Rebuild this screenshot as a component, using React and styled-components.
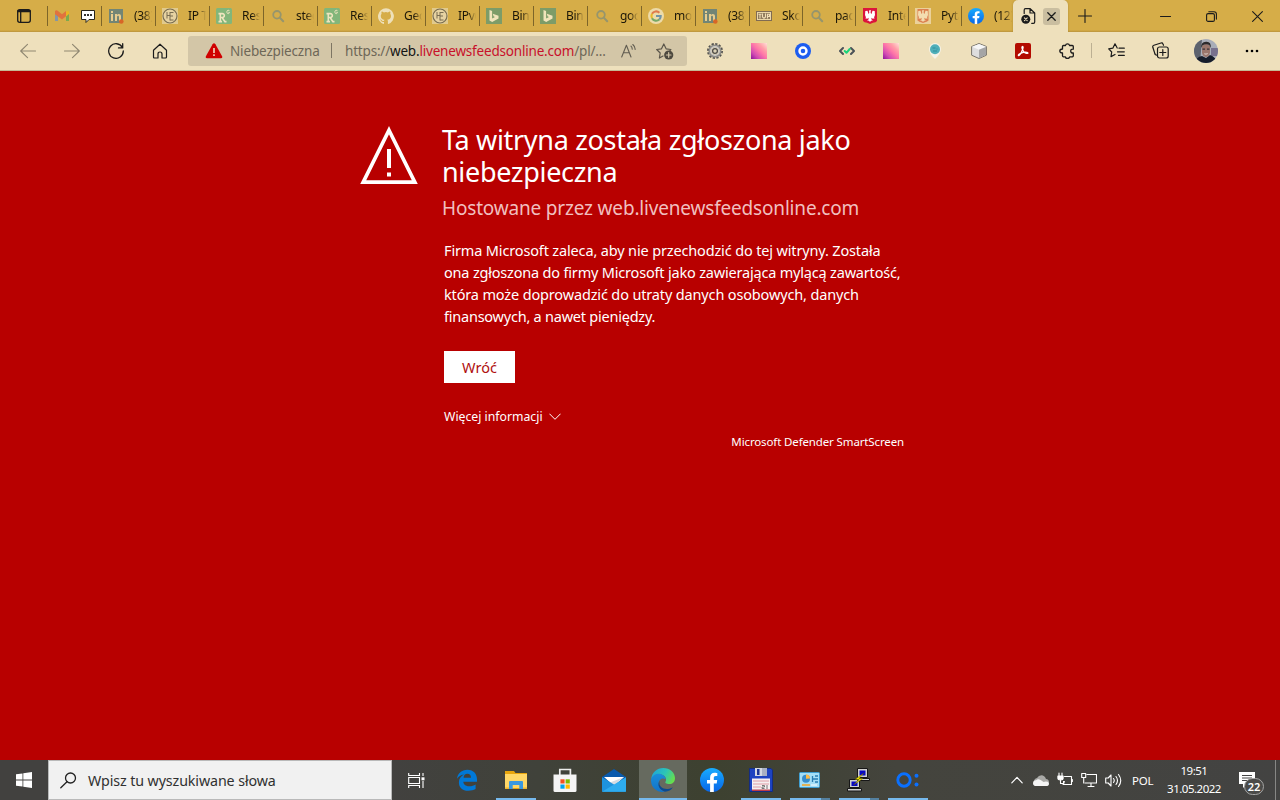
import React from "react";
import styled, { createGlobalStyle, css } from "styled-components";

const Global = createGlobalStyle`
  * { box-sizing: border-box; }
  body { margin: 0; overflow: hidden; font-family: "Noto Sans", "Open Sans", sans-serif; }
  svg { display: block; flex: none; }
`;

const Screen = styled.div`
  width: 1280px;
  height: 800px;
  display: flex;
  flex-direction: column;
  background: #b80000;
`;

/* ---------- tab strip ---------- */
const TabStrip = styled.header`
  height: 32px;
  display: flex;
  background: linear-gradient(#d6ad48 0 30px, #c9a040 31px, #b8933f 32px);
`;
const TabActions = styled.div`
  width: 47px;
  display: flex;
  align-items: center;
  justify-content: center;
`;
const Tab = styled.div`
  width: ${(p) => p.$w}px;
  display: flex;
  align-items: center;
  padding-left: 7px;
  background: linear-gradient(#7d6529, #7d6529) 0 6px / 1px 20px no-repeat;
`;
const TabIcon = styled.div`
  width: 16px;
  height: 16px;
  opacity: ${(p) => (p.$faded ? 0.55 : 1)};
`;
const TabExtra = styled.div`
  width: 16px;
  height: 16px;
  margin-left: 10px;
`;
const TabTitle = styled.span`
  width: 18px;
  margin-left: 10px;
  overflow: hidden;
  white-space: nowrap;
  font-size: 12px;
  line-height: 18px;
  letter-spacing: -0.3px;
  color: #1c1708;
  mask-image: linear-gradient(90deg, #000 55%, transparent 100%);
`;
const ActiveTab = styled.div`
  width: 55px;
  margin-left: -1px;
  display: flex;
  align-items: center;
  gap: 6px;
  padding-left: 8px;
  border-radius: 5px 5px 0 0;
  background: #eee0bc;
  box-shadow: 0 0 2px #86692088;
  clip-path: inset(-3px -3px 0 -3px);
`;
const CloseTab = styled.div`
  width: 17px;
  height: 17px;
  display: grid;
  place-items: center;
  border-radius: 3px;
  background: #cabea0;
`;
const NewTab = styled.div`
  width: 34px;
  display: grid;
  place-items: center;
`;
const WindowButtons = styled.div`
  margin-left: auto;
  display: flex;
`;
const WindowButton = styled.div`
  width: 46px;
  display: grid;
  place-items: center;
`;

/* ---------- toolbar ---------- */
const Toolbar = styled.div`
  height: 39px;
  display: flex;
  align-items: center;
  padding: 0 6px 1px;
  background: #eee0bc;
  border-bottom: 1px solid #c5b794;
`;
const ToolSlot = styled.div`
  flex: none;
  width: ${(p) => p.$w || 44}px;
  height: 36px;
  display: grid;
  place-items: center;
`;
const AddressBar = styled.div`
  flex: none;
  width: 499px;
  height: 30px;
  margin: 0 6px;
  display: flex;
  align-items: center;
  padding-left: 17px;
  border-radius: 3px;
  background: #d3c6a7;
  font-size: 13.5px;
  color: #6e6757;
`;
const Security = styled.span`
  flex: none;
  width: 101px;
  margin-left: 7px;
  letter-spacing: -0.15px;
`;
const AddressDivider = styled.i`
  flex: none;
  width: 1px;
  height: 15px;
  background: #7d7563;
`;
const Url = styled.span`
  flex: none;
  width: 266px;
  margin-left: 13px;
  white-space: nowrap;
  letter-spacing: -0.19px;
  b { font-weight: 400; color: #141414; }
  em { font-style: normal; color: #c8102a; }
`;
const AddressIcon = styled.div`
  flex: none;
  width: 36px;
  display: grid;
  place-items: center;
`;
const ToolDivider = styled.i`
  flex: none;
  width: 1px;
  height: 15px;
  margin: 0 2px;
  background: #bcb093;
`;
const Pixels = styled.div`
  width: 16px;
  height: 16px;
  background: linear-gradient(45deg, #8d139c 0%, #d24bb2 25%, #ff78a8 52%, #ff9fa8 72%, #ffe1d8 100%);
`;
const Avatar = styled.div`
  width: 24px;
  height: 24px;
  border-radius: 50%;
  overflow: hidden;
`;

/* ---------- warning page ---------- */
const Page = styled.main`
  flex: 1;
  display: flex;
  align-items: flex-start;
  padding: 53px 0 0 360px;
  color: #fff;
`;
const WarningSign = styled.div`
  width: 82px;
  padding-top: 2px;
`;
const Message = styled.section`
  width: 462px;
`;
const Title = styled.h1`
  margin: 0;
  font-size: 27px;
  line-height: 32px;
  font-weight: 400;
  letter-spacing: -0.32px;
  white-space: nowrap;
`;
const Host = styled.p`
  margin: 6px 0 0;
  font-size: 19px;
  line-height: 28px;
  letter-spacing: -0.18px;
  color: #f0bfbf;
`;
const Details = styled.div`
  margin: 17px 0 0 2px;
  white-space: nowrap;
`;
const Line = styled.div`
  font-size: 14.5px;
  line-height: 22px;
  letter-spacing: ${(p) => p.$ls}px;
`;
const BackButton = styled.button`
  display: block;
  width: 71px;
  height: 32px;
  margin: 24px 0 0;
  padding: 0;
  border: 0;
  background: #fff;
  color: #b01010;
  font: 400 14.5px/33px "Noto Sans", "Open Sans", sans-serif;
`;
const MoreInfo = styled.div`
  display: flex;
  align-items: center;
  gap: 6px;
  margin-top: 23px;
  font-size: 12.25px;
  line-height: 22px;
`;
const Brand = styled.div`
  margin-top: 5px;
  text-align: right;
  font-size: 11.5px;
  line-height: 18px;
  letter-spacing: -0.13px;
`;

/* ---------- taskbar ---------- */
const Taskbar = styled.footer`
  height: 40px;
  display: flex;
  background: linear-gradient(90deg, #42413f 0, #42413f 30%, #40423a 42%, #3d4130 56%, #44443d 70%, #434342 100%);
`;
const Start = styled.div`
  width: 48px;
  display: grid;
  place-items: center;
`;
const Search = styled.div`
  width: 344px;
  display: flex;
  align-items: center;
  gap: 11px;
  padding-left: 11px;
  border: 1px solid #b9b9b9;
  background: #f1f1f1;
  color: #303030;
  font-size: 14.25px;
  letter-spacing: -0.1px;
  span { white-space: nowrap; }
`;
const Task = styled.div`
  width: 49px;
  display: grid;
  place-items: center;
  ${(p) =>
    p.$open &&
    css`
      background: linear-gradient(90deg, #76b9ed 0 ${p.$stack ? "31px" : "40px"}, #54809f ${p.$stack ? "31px" : "40px"})
        5px bottom / 40px 2px no-repeat;
    `}
  ${(p) =>
    p.$active &&
    css`
      background: linear-gradient(#666a5f 0 38px, #76b9ed 38px) 1px 0 / 48px 40px no-repeat;
    `}
`;
const TaskViewSlot = styled(Task)`
  width: 50px;
  padding-right: 2px;
`;
const Tray = styled.div`
  margin-left: auto;
  display: flex;
  align-items: center;
  color: #fff;
`;
const TraySlot = styled.div`
  width: 24px;
  display: grid;
  place-items: center;
`;
const Language = styled.span`
  width: 40px;
  padding-left: 7px;
  font-size: 11.5px;
  letter-spacing: -0.2px;
`;
const Clock = styled.div`
  width: 58px;
  text-align: center;
  font-size: 11.5px;
  line-height: 18px;
  letter-spacing: -0.5px;
`;
const Notifications = styled.div`
  position: relative;
  width: 52px;
  height: 40px;
  padding: 12px 0 0 16px;
`;
const Count = styled.span`
  position: absolute;
  left: 21px;
  top: 18px;
  width: 20px;
  height: 17px;
  border: 1px solid #a5a5a4;
  border-radius: 9px;
  background: #4b4b49;
  text-align: center;
  font-size: 11px;
  line-height: 15px;
  font-weight: 600;
`;
const ShowDesktop = styled.i`
  width: 5px;
  height: 40px;
  border-left: 1px solid #878785;
`;

/* ---------- drawings ---------- */
const Glyph = ({ w = 16, h, box, color = "#1b1b1b", sw = 1.1, children }) => (
  <svg width={w} height={h || w} viewBox={box || `0 0 ${w} ${h || w}`} fill="none" stroke={color} strokeWidth={sw} strokeLinecap="round" strokeLinejoin="round">
    {children}
  </svg>
);
const Art = ({ w = 16, h, box, children }) => (
  <svg width={w} height={h || w} viewBox={box || `0 0 ${w} ${h || w}`}>{children}</svg>
);

const Gmail = () => (
  <Art>
    <path d="M1 3v10h3V6z" fill="#4285f4" />
    <path d="M15 3v10h-3V6z" fill="#34a853" />
    <path d="M12 3.5 15 3v3l-3 2.5z" fill="#fbbc04" />
    <path d="M1 3.2C1.5 2 3 2 4 3l4 3.2L12 3v5.3L8 11.4 1 6.3z" fill="#ea4335" />
  </Art>
);
const Chat = () => (
  <Art>
    <path d="M1.5 2.5h13v9H9l-3 3v-3H1.5z" fill="#fff" stroke="#27241a" strokeLinejoin="round" />
    <path d="M4 6h2v2H4zM7 6h2v2H7zM10 6h2v2h-2z" fill="#333" />
  </Art>
);
const LinkedIn = () => (
  <Art>
    <g opacity=".62">
      <rect x="1" y="1" width="14" height="14" fill="#356d91" />
      <path d="M3 6h2v7H3zM3 3h2v2H3zM7 6h2v1c1-1.6 4-1.4 4 1.3V13h-2V9c0-1.7-2-1.5-2 0v4H7z" fill="#f1e0bb" />
    </g>
    <circle cx="13.3" cy="13.5" r="2.3" fill="#d86626" />
  </Art>
);
const IpTool = () => (
  <Art>
    <rect width="16" height="16" fill="#e5d19d" opacity=".8" />
    <circle cx="8" cy="8" r="7" fill="#e6d2a2" stroke="#756b51" strokeWidth="1.1" />
    <path d="M5 4v6.500M8 4v8.500M5 7.500h3M8 4.500h3.500M8 8h3M8 12h3.500" fill="none" stroke="#796d51" />
  </Art>
);
const ResearchGate = () => (
  <Art>
    <rect width="16" height="16" rx="1.5" fill="#82b67a" />
    <path d="M2.5 5.6h3.7c3 0 2.7 3.9 0 3.9H4.3M4.3 6v7.5M2.5 13.6h3.5M6.3 9.8l2.6 3.8h1.6" fill="none" stroke="#efe5bf" strokeWidth="1.6" />
    <path d="M13.4 2.6c-2-1-2.5.4-2.5 1.5 0 2 2.5 2 2.5.2h-1" fill="none" stroke="#efe5bf" />
  </Art>
);
const Magnifier = () => (
  <Art>
    <circle cx="7" cy="6.8" r="3.8" fill="none" stroke="#96956c" strokeWidth="1.8" />
    <path d="m9.8 9.6 3.4 3.6" stroke="#96956c" strokeWidth="2.1" strokeLinecap="round" />
  </Art>
);
const GitHub = () => (
  <Art>
    <path fill="#eee0b9" d="M8 .3a8 8 0 0 0-2.5 15.6c.4 0 .5-.2.5-.4v-1.5c-2.2.5-2.7-.9-2.7-.9-.4-.9-.9-1.2-.9-1.2-.7-.5.1-.5.1-.5.8.1 1.2.8 1.2.8.7 1.2 1.9.9 2.3.7.1-.5.3-.9.5-1.1-1.8-.2-3.7-.9-3.7-4 0-.9.3-1.6.8-2.1-.1-.2-.4-1 .1-2.1 0 0 .7-.2 2.2.8a7.5 7.5 0 0 1 4 0c1.5-1 2.2-.8 2.2-.8.5 1.1.2 1.9.1 2.1.5.5.8 1.3.8 2.1 0 3.1-1.9 3.7-3.7 4 .3.3.6.8.6 1.5v2.2c0 .2.1.5.5.4A8 8 0 0 0 8 .3" />
  </Art>
);
const Bing = () => (
  <Art>
    <rect width="16" height="16" fill="#7d9c68" />
    <path d="m3.5 2 2.6.9v7.5L9 9 7.5 8.2 6.8 5.8l5.7 2v2.6L6.2 14l-2.7-1.6z" fill="#f1e4bb" />
  </Art>
);
const Google = () => (
  <Art>
    <circle cx="8" cy="8" r="8" fill="#eddba9" />
    <g fill="none" strokeWidth="2.1">
      <path d="M11.4 4.7A4.7 4.7 0 0 0 4 5.8" stroke="#df7a4b" />
      <path d="M4 5.8a4.8 4.8 0 0 0 0 4.4" stroke="#e7b82b" />
      <path d="M4 10.2a4.7 4.7 0 0 0 7.3 1.3" stroke="#77a865" />
      <path d="M11.3 11.5A4.7 4.7 0 0 0 12.7 8H8" stroke="#7193a5" />
    </g>
  </Art>
);
const Tvp = () => (
  <Art>
    <rect x=".5" y="3.5" width="15" height="9" fill="#ead7a9" stroke="#806b52" />
    <rect x="2" y="5" width="12" height="6" fill="#8f7a5c" />
    <path d="M2.5 6.3h3M4 6v4.500M6.500 5.500v3.500L8 10.300l1.500-1.300V5.500M11.500 10.500V6.200h2v2.300h-2" stroke="#f2dfb6" strokeWidth="1.100" fill="none" />
  </Art>
);
const Eagle = ({ faded }) => (
  <Art>
    {faded && <rect width="16" height="16" fill="#ebd19a" />}
    <path d={faded ? "M2.5 1h11v11.5q-1 1-5.5 2.5-4.5-1.5-5.5-2.5z" : "M1 0h14v13q-1 1.5-4 1.7L8 16l-3-1.3q-3-.2-4-1.7z"} fill={faded ? "#dc8050" : "#dc143c"} />
    <path d="M8.800 2 7 2.500 7.300 5 6.500 6 5.500 2.800 3.300 3 3 7l1 2.500-.8.8 2 .5 1.500-1-.3 2-1.400.8 2 .2L8 14l1-1.200 2-.2-1.400-.8-.3-2 1.500 1 2-.5-.8-.8L13 7l-.3-4-2.200-.2L9.500 6 8.600 5z" fill={faded ? "#f3ddb0" : "#fff"} />
  </Art>
);
const Facebook = ({ w = 16 }) => (
  <Art w={w} box="0 0 24 24">
    <defs><linearGradient id="fb" x2="0" y2="1"><stop stopColor="#18acfe" /><stop offset="1" stopColor="#0866e8" /></linearGradient></defs>
    <circle cx="12" cy="12" r="12" fill="url(#fb)" />
    <path d="m16.700 15.500.5-3.500h-3.400V9.800c0-1 .5-1.900 2-1.900h1.500V5s-1.400-.3-2.700-.3c-2.800 0-4.500 1.700-4.500 4.700V12H7v3.500h3.100v8.400a12 12 0 0 0 3.700 0v-8.400z" fill="#fff" />
  </Art>
);
const BlockedPage = () => (
  <Glyph sw={1.2}>
    <path d="M3.200 5.500V2q0-1.300 1.300-1.300h4.700L13.700 5v9q0 1.300-1.300 1.300h-1.700M9 .8V5h4.700" />
    <circle cx="4.800" cy="11.300" r="4.500" fill="#1b1b1b" stroke="none" />
    <path d="m3.400 9.900 2.800 2.800M6.200 9.900l-2.800 2.800" stroke="#eee0bc" strokeWidth="1.100" />
  </Glyph>
);
const Gear = () => (
  <Art>
    <circle cx="8" cy="8" r="6.900" fill="none" stroke="#555450" strokeWidth="2.200" strokeDasharray="2.200 1.413" />
    <circle cx="8" cy="8" r="5.200" fill="none" stroke="#8f8e89" strokeWidth="2.800" />
    <circle cx="8" cy="8" r="4.300" fill="none" stroke="#cfceca" strokeWidth="1.300" />
    <circle cx="8" cy="8" r="2.400" fill="#dcd2b6" stroke="#4b4a48" strokeWidth="1.300" />
  </Art>
);
const Cube = () => (
  <Art>
    <path d="m8 .5 7.400 3v8.700L8 15.500.6 12.200V3.500z" fill="#ddd" stroke="#77736a" />
    <path d="M8 1 15 3.700 8 6.800 1 3.700z" fill="#f6f6f6" />
    <path d="M8 6.800 15 4v8L8 15z" fill="#a5a5a5" />
  </Art>
);
const Acrobat = () => (
  <Art>
    <rect width="16" height="16" rx="2" fill="#b30b00" />
    <path d="M7.300 3.500c-1 .3.3 3.800 1.400 5.200 1.300 1.500 4.200 2.300 4.300 1.300 0-1.200-4.100-1.100-6.200-.2-2.200.9-4 2.100-3.300 2.800C4.600 13.300 8.200 6.500 8.100 4.300c0-.6-.3-1-.8-.8Z" fill="none" stroke="#fff" strokeWidth="1.300" />
  </Art>
);
const Face = () => (
  <Art w={24}>
    <rect width="24" height="24" fill="#a9adb8" />
    <path d="M0 0h8L6 24H0z" fill="#5d626d" />
    <path d="M17 9h7v8h-7z" fill="#78718d" />
    <path d="M1 24q1-6 7-7l4 2 4-3q6 2 7 8z" fill="#171d2b" />
    <path d="M8 7q4-4 8 0v6.500q-1 4.500-4 4.500t-4-4z" fill="#9b766c" />
    <path d="M7.200 9Q6.500 3.200 12 2.800T16.700 9l-1.400-3Q12 4.500 8.600 6.200z" fill="#2d2a2c" />
    <path d="M8.500 10.200h2.500M13 10.200h2.400" fill="none" stroke="#3b3338" strokeWidth="1.300" />
    <path d="M10.300 14.800q1.700.8 3.400-.2" stroke="#e2d5d0" fill="none" />
  </Art>
);
const WinLogo = () => (
  <Art>
    <path d="m0 2.300 6.500-.9v6.200H0zM7.300 1.200 16 0v7.600H7.300zM0 8.400h6.500v6.200L0 13.700zM7.300 8.400H16V16l-8.700-1.200z" fill="#fff" />
  </Art>
);
const TaskView = () => (
  <svg width="17" height="17" viewBox="0 0 17 17" fill="none" stroke="#fff" strokeWidth="1.1">
    <path d="M.7 1v2.500h10.800V1M.7 5.500h10.800v6H.7zM.7 16v-2.500h10.800V16M15 1v3M15 9v7" />
    <path d="M13.500 5.300h3v3h-3z" fill="#fff" stroke="none" />
  </svg>
);
const OldEdge = () => (
  <Art w={20} h={22}>
    <path fill="#0078d7" d="M0 9.800C.7 4.200 4.700.7 10.300.7 16.700.7 20 5.100 20 10.500v2.300H6.300c.2 3 2.800 4.500 6 4.500 2.600 0 4.600-.7 6.300-1.800v4.600c-2 1.100-4.400 1.700-7.300 1.700-6 0-9.400-3.400-9.400-8.400 0-3.800 1.900-6.200 5-7.900C3.700 6 1.400 7.300 0 9.800Zm6.600-1h7.400c0-2.500-1.300-4-3.600-4S6.700 6.400 6.600 8.800Z" />
  </Art>
);
const Explorer = () => (
  <Art w={22} h={20}>
    <path d="M0 1h9l1.500 2H22v16H0z" fill="#e8a50d" />
    <path d="M0 4h22v14H0z" fill="#ffd767" />
    <path d="M4 19v-7q0-1 1-1h12q1 0 1 1v7h-3.700v-4H7.700v4z" fill="#3a98df" />
    <path d="M0 17.500h4V19H0zM18 17.500h4V19h-4z" fill="#efb52c" />
  </Art>
);
const Store = () => (
  <Art w={24} h={25}>
    <path d="M6.800 8V1.500h10.600V8" fill="none" stroke="#ececec" strokeWidth="1.700" />
    <path d="M.5 6.500h23v16q0 1.500-1.500 1.500H2q-1.500 0-1.500-1.500z" fill="#f4f4f4" />
    <path d="M7.400 11.300h4.200v4.200H7.400z" fill="#f25022" /><path d="M12.600 11.300h4.200v4.200h-4.200z" fill="#7fba00" />
    <path d="M7.400 16.500h4.200v4.200H7.400z" fill="#00a4ef" /><path d="M12.600 16.500h4.200v4.200h-4.200z" fill="#ffb900" />
  </Art>
);
const Mail = () => (
  <Art w={24} h={23}>
    <path d="M0 8 12 0l12 8v5H0z" fill="#0a5aad" />
    <path d="M2 8h20L12 17z" fill="#fff" /><path d="M22 8 12 16 8 13.400z" fill="#d7dce2" />
    <path d="M0 8.300 12 15.500 24 22.700H0z" fill="#1e93de" /><path d="M24 8.300v14.400H0z" fill="#2eacef" />
  </Art>
);
const NewEdge = () => (
  <Art w={24}>
    <defs>
      <linearGradient id="eg1" x1="0" y1=".2" x2="1" y2=".6"><stop stopColor="#1ea3db" /><stop offset=".55" stopColor="#2dc6b5" /><stop offset="1" stopColor="#67df4c" /></linearGradient>
      <linearGradient id="eg2" x2="0" y2="1"><stop stopColor="#1a8edb" /><stop offset="1" stopColor="#1273c8" /></linearGradient>
    </defs>
    <path d="M.2 11C1.200 4 6 0 12.200 0 19 0 24 4.700 24 10.200c0 3.700-2.500 5.800-5.600 5.800-3.500 0-4.400-1.300-4-2 1.200-1.600 1-4.800-2.100-6.700C8.600 5 3 6.400.2 11Z" fill="url(#eg1)" />
    <path d="M.1 11.400C1.400 6.600 6.600 5 10.200 6.300c4 1.400 4.600 4 4.200 5-2.500-2-7 0-6.800 4.200.1 4.600 3.500 7.700 6.300 8.200C6 25-.7 19 .1 11.400Z" fill="url(#eg2)" />
    <path d="M8.800 12.800c-2 5.500 3.400 8.800 8.100 8.200 2.200-.2 3.900-1.100 5-1.800-1.500 2.700-4.500 4.300-8 4.500C8.300 22 5.700 16.500 8.800 12.800Z" fill="#0b4a91" />
  </Art>
);
const Floppy = () => (
  <Art w={24}>
    <path d="M.5.5H22l1.500 1.500v21.500H.5z" fill="#1d43c1" stroke="#142d82" />
    <path d="M6 0h12v8H6z" fill="#d3d8e2" /><path d="M8 1h2.500v6H8z" fill="#1b3597" /><path d="M13 0h5v8h-5z" fill="#a8b0c3" />
    <path d="M3 10.500h18V23H3z" fill="#f5eff1" /><path d="M4 13h16M4 16h16M4 19h8" stroke="#df9ca6" /><path d="M3 21.500h18V23H3z" fill="#bd3d4a" />
    <path d="M13 17.500h2.500v1.500H13v1.500h2.500M18 17v4" stroke="#777" fill="none" />
  </Art>
);
const Panel = () => (
  <Art w={21} h={17}>
    <rect x=".5" y=".5" width="20" height="15" rx="1" fill="#a4def6" stroke="#3e9ed2" />
    <circle cx="7" cy="6.700" r="4" fill="#368dcc" /><path d="M7 6.700V2.600a4 4 0 0 1 4 4z" fill="#ffbb45" />
    <path d="M13.500 4v6M13.500 7H16M16 4h3M16 7h3M16 10h3" stroke="#287db3" strokeWidth="1.300" />
    <path d="M3 13h8" stroke="#f6a321" strokeWidth="1.500" /><path d="M12 13h6" stroke="#fff" />
  </Art>
);
const Putty = () => (
  <Art w={24} h={24}>
    <path d="M10.500.5h10v9h-10zM10.500 10.500h12v2h-12zM2.500 11.500h10v8h-10zM.5 20.500h14v2.500H.5z" fill="#cfcfcf" stroke="#171717" />
    <path d="M12.500 2.500h6v5h-6zM4.500 13.500h6v4.500h-6z" fill="#0707c4" />
    <path d="M17 5 8 11.500h4L6.500 17l9.500-6.500h-4z" fill="#fff200" stroke="#4d4800" strokeWidth=".4" />
  </Art>
);
const Dots = () => (
  <Art w={24} h={18}>
    <circle cx="8" cy="9" r="6.200" fill="none" stroke="#0a70ff" strokeWidth="2.900" />
    <circle cx="20.500" cy="4.800" r="2" fill="#0a70ff" /><circle cx="20.500" cy="13.500" r="2" fill="#0a70ff" />
  </Art>
);

const tabs = [
  { icon: <LinkedIn />, text: "(38)" },
  { icon: <IpTool />, text: "IP To" },
  { icon: <ResearchGate />, text: "Rese" },
  { icon: <Magnifier />, text: "steg" },
  { icon: <ResearchGate />, text: "Rese" },
  { icon: <GitHub />, text: "Geo" },
  { icon: <IpTool />, text: "IPv6" },
  { icon: <Bing />, text: "Bing" },
  { icon: <Bing />, text: "Bing" },
  { icon: <Magnifier />, text: "goo" },
  { icon: <Google />, text: "moj" },
  { icon: <LinkedIn />, text: "(38)" },
  { icon: <Tvp />, text: "Sko", w: 53 },
  { icon: <Magnifier />, text: "pac", w: 53 },
  { icon: <Eagle />, text: "Inte", w: 53 },
  { icon: <Eagle faded />, text: "Pyta", w: 53 },
  { icon: <Facebook />, text: "(12)", w: 53 },
];

export default function App() {
  return (
    <Screen>
      <Global />
      <TabStrip>
        <TabActions>
          <Glyph sw={1.3}><rect x="1.700" y="1.700" width="12.600" height="12.600" rx="2" /><path d="M2.300 3.200h11.400" strokeWidth="2.300" /><path d="M4.700 4v10" /></Glyph>
        </TabActions>
        <Tab $w={54}>
          <TabIcon $faded><Gmail /></TabIcon>
          <TabExtra><Chat /></TabExtra>
        </Tab>
        {tabs.map((t, i) => (
          <Tab key={i} $w={t.w || 54}>
            <TabIcon>{t.icon}</TabIcon>
            <TabTitle>{t.text}</TabTitle>
          </Tab>
        ))}
        <ActiveTab>
          <BlockedPage />
          <CloseTab><Glyph w={9} sw={1.3}><path d="m.8.8 7.400 7.400M8.200.8.8 8.200" /></Glyph></CloseTab>
        </ActiveTab>
        <NewTab><Glyph w={14}><path d="M7 .5v13M.5 7h13" /></Glyph></NewTab>
        <WindowButtons>
          <WindowButton><Glyph w={11}><path d="M.5 5.500h10" /></Glyph></WindowButton>
          <WindowButton><Glyph w={11}><rect x=".6" y="2.600" width="7.800" height="7.800" rx="1.500" /><path d="M2.800.7H8q2.400 0 2.400 2.400v5" /></Glyph></WindowButton>
          <WindowButton><Glyph w={11}><path d="m.6.6 9.800 9.800M10.400.6.6 10.400" /></Glyph></WindowButton>
        </WindowButtons>
      </TabStrip>

      <Toolbar>
        <ToolSlot><Glyph color="#8f8771"><path d="M15.500 8H.7M7.500 1.300.7 8l6.800 6.700" /></Glyph></ToolSlot>
        <ToolSlot><Glyph color="#8f8771"><path d="M.5 8h14.800M8.500 1.300 15.300 8l-6.800 6.700" /></Glyph></ToolSlot>
        <ToolSlot><Glyph sw={1.3}><path d="M14.400 4.500A7.300 7.300 0 1 0 15.300 8M14.700.7v4.200h-4.200" /></Glyph></ToolSlot>
        <ToolSlot><Glyph sw={1.2}><path d="M1.500 7.200 8 1.200l6.500 6V14q0 1-1 1H10v-4q0-2-2-2t-2 2v4H2.500q-1 0-1-1z" /></Glyph></ToolSlot>
        <AddressBar>
          <Art w={18} h={16}>
            <path d="M7.600 1.300q1.400-2.100 2.800 0l6.700 12q.7 1.900-1.300 2H2.200q-2-.1-1.300-2z" fill="#d00000" />
            <path d="M8.200 5h1.600v5H8.200zM8.200 11.300h1.600v1.600H8.200z" fill="#f3d8c0" />
          </Art>
          <Security>Niebezpieczna</Security>
          <AddressDivider />
          <Url>https://<b>web.</b><em>livenewsfeedsonline.com</em>/pl/...</Url>
          <AddressIcon>
            <Glyph color="#625d51"><path d="M.7 14 5.400 2.200 10 14M2.500 9.800h5.900M10 3.200q1.300 1.300 1.200 3M11.800 1.500q2.500 2.100 2.300 5" /></Glyph>
          </AddressIcon>
          <AddressIcon>
            <Glyph w={18} color="#5b564b" sw={1.2}>
              <path d="m7 14-3.600 2 .8-5L.7 7.500l4.800-.7L7.800 2l2.300 4.800 4.800.7-1 1" />
              <circle cx="12.700" cy="13" r="4.600" fill="#4d493f" stroke="none" /><path d="M10.400 13H15M12.700 10.700v4.600" stroke="#d3c6a7" />
            </Glyph>
          </AddressIcon>
        </AddressBar>
        <ToolSlot><Gear /></ToolSlot>
        <ToolSlot><Pixels /></ToolSlot>
        <ToolSlot><Art><circle cx="8" cy="8" r="8" fill="#1d5df0" /><circle cx="8" cy="8" r="3.500" fill="none" stroke="#fff" strokeWidth="2.400" /></Art></ToolSlot>
        <ToolSlot><Glyph sw={2} color="#4b5258"><path d="M4 5 1 8l3 3M12 5l3 3-3 3" /><path d="m5.700 8 1.800 1.800L10.700 6" stroke="#19d47b" /></Glyph></ToolSlot>
        <ToolSlot><Pixels /></ToolSlot>
        <ToolSlot><Art><path d="M8 16Q2 10.500 2 6A6 6 0 0 1 14 6Q14 10.500 8 16" fill="#f5f2e7" /><circle cx="8" cy="6.200" r="5" fill="#4fafb9" /><path d="M5.500 5h3M9.500 6h1M6 8h4" stroke="#2e8e9c" /></Art></ToolSlot>
        <ToolSlot><Cube /></ToolSlot>
        <ToolSlot><Acrobat /></ToolSlot>
        <ToolSlot>
          <Glyph sw={1.3}><path d="M4.500 2.500h2Q6.800.8 8.500.8t2 1.700h2.800q1 0 1 1v2.700q-2.600-.2-2.600 1.900t2.600 1.900v2.800q0 1-1 1h-2.600q-.3 1.700-2.200 1.700t-2.100-1.700H4.500q-1 0-1-1V10Q.8 9.900.8 8t2.700-2V3.500q0-1 1-1z" /></Glyph>
        </ToolSlot>
        <ToolDivider />
        <ToolSlot><Glyph w={17} sw={1.2}><path d="M9.200 6 7 1.800 4.800 6.200.7 6.900 3.700 10l-.7 4.600 4-2.100M11 6.200h5.300M9.500 9.800h6.800M10.500 13.400h5.800" /></Glyph></ToolSlot>
        <ToolSlot><Glyph w={17} sw={1.2}><path d="M3 12 .8 5.300q-.4-1.600 1.100-2.100L9 1q1.500-.4 2 1l.5 1.300" /><path d="M3 12q.2 1 2 1.200" /><rect x="5.500" y="5" width="10.700" height="11" rx="2" /><path d="M7.800 10.500h6M10.800 7.500v6" /></Glyph></ToolSlot>
        <ToolSlot $w={48}><Avatar><Face /></Avatar></ToolSlot>
        <ToolSlot><Art w={14} h={4}><circle cx="2" cy="2" r="1.300" /><circle cx="7" cy="2" r="1.300" /><circle cx="12" cy="2" r="1.300" /></Art></ToolSlot>
      </Toolbar>

      <Page>
        <WarningSign>
          <svg width="58" height="58" viewBox="0 0 58 58">
            <path d="M29 4.200 54.800 56.100H3.200z" fill="none" stroke="#fff" strokeWidth="3.700" />
            <path d="M27 23h4v19h-4zM27 46.500h4v4h-4z" fill="#fff" />
          </svg>
        </WarningSign>
        <Message>
          <Title>Ta witryna została zgłoszona jako<br />niebezpieczna</Title>
          <Host>Hostowane przez web.livenewsfeedsonline.com</Host>
          <Details>
            <Line $ls={-0.15}>Firma Microsoft zaleca, aby nie przechodzić do tej witryny. Została</Line>
            <Line $ls={-0.19}>ona zgłoszona do firmy Microsoft jako zawierająca mylącą zawartość,</Line>
            <Line $ls={-0.15}>która może doprowadzić do utraty danych osobowych, danych</Line>
            <Line $ls={-0.23}>finansowych, a nawet pieniędzy.</Line>
            <BackButton>Wróć</BackButton>
            <MoreInfo>
              Więcej informacji
              <Glyph w={12} h={8} color="#fff" sw={1}><path d="m.7 1 5.300 5.300L11.300 1" /></Glyph>
            </MoreInfo>
            <Brand>Microsoft Defender SmartScreen</Brand>
          </Details>
        </Message>
      </Page>

      <Taskbar>
        <Start><WinLogo /></Start>
        <Search>
          <Glyph w={17} color="#222" sw={1.3}><circle cx="10.500" cy="6" r="5" /><path d="M7 9.700.8 15.800" /></Glyph>
          <span>Wpisz tu wyszukiwane słowa</span>
        </Search>
        <TaskViewSlot><TaskView /></TaskViewSlot>
        <Task><OldEdge /></Task>
        <Task $open><Explorer /></Task>
        <Task><Store /></Task>
        <Task><Mail /></Task>
        <Task $active><NewEdge /></Task>
        <Task><Facebook w={24} /></Task>
        <Task $open><Floppy /></Task>
        <Task $open $stack><Panel /></Task>
        <Task $open $stack><Putty /></Task>
        <Task $open><Dots /></Task>
        <Tray>
          <TraySlot><Glyph w={12} h={8} color="#fff" sw={1.2}><path d="m.8 6.800 5.200-5.500 5.200 5.500" /></Glyph></TraySlot>
          <TraySlot>
            <Art w={16} h={11}>
              <path d="M1 7Q1 3.500 4 3 5.500.3 8.500.3T13 4q3 .3 3 3.500z" fill="#a9a9a6" />
              <path d="M3.200 11Q0 11 0 8.200t3-2.900Q5 3.300 7.600 5l3 2 2.200-.6Q16 6.300 16 8.700 16 11 13 11z" fill="#f5f5f5" />
            </Art>
          </TraySlot>
          <TraySlot>
            <Glyph color="#fff" sw={1.1}>
              <path d="M7.500 4.500h7v8H6M15.700 7.500v2M2 1v3M5 1v3M3.500 8v3.500H6" />
              <path d="M.9 4h5.200v2.300Q6 8 3.500 8T.9 6.300z" fill="#fff" />
              <path d="M6 12.500V9h2l-1 3.500z" fill="#fff" stroke="none" />
            </Glyph>
          </TraySlot>
          <TraySlot><Glyph color="#fff" sw={1.1}><path d="M6 2.500h9.500v8.500H4M10 11v3M7 14.500h6M.7 1.500h4v4h-4zM2.700 5.500v5.500" /></Glyph></TraySlot>
          <TraySlot><Glyph w={17} color="#fff" sw={1.1}><path d="M.7 6h2.500L6 3v11l-2.800-3H.7zM8.500 6.500q1.500 2 0 4M11 4.500q3 4 0 8M13.500 2.500q4.500 6 0 12" /></Glyph></TraySlot>
          <Language>POL</Language>
          <Clock>19:51<br />31.05.2022</Clock>
          <Notifications>
            <Art w={16} h={16}><path d="M0 0h16v12H8l-4 4v-4H0z" fill="#fff" /><path d="M3 3.500h10M3 6h10M3 8.500h10" stroke="#444" /></Art>
            <Count>22</Count>
          </Notifications>
          <ShowDesktop />
        </Tray>
      </Taskbar>
    </Screen>
  );
}
